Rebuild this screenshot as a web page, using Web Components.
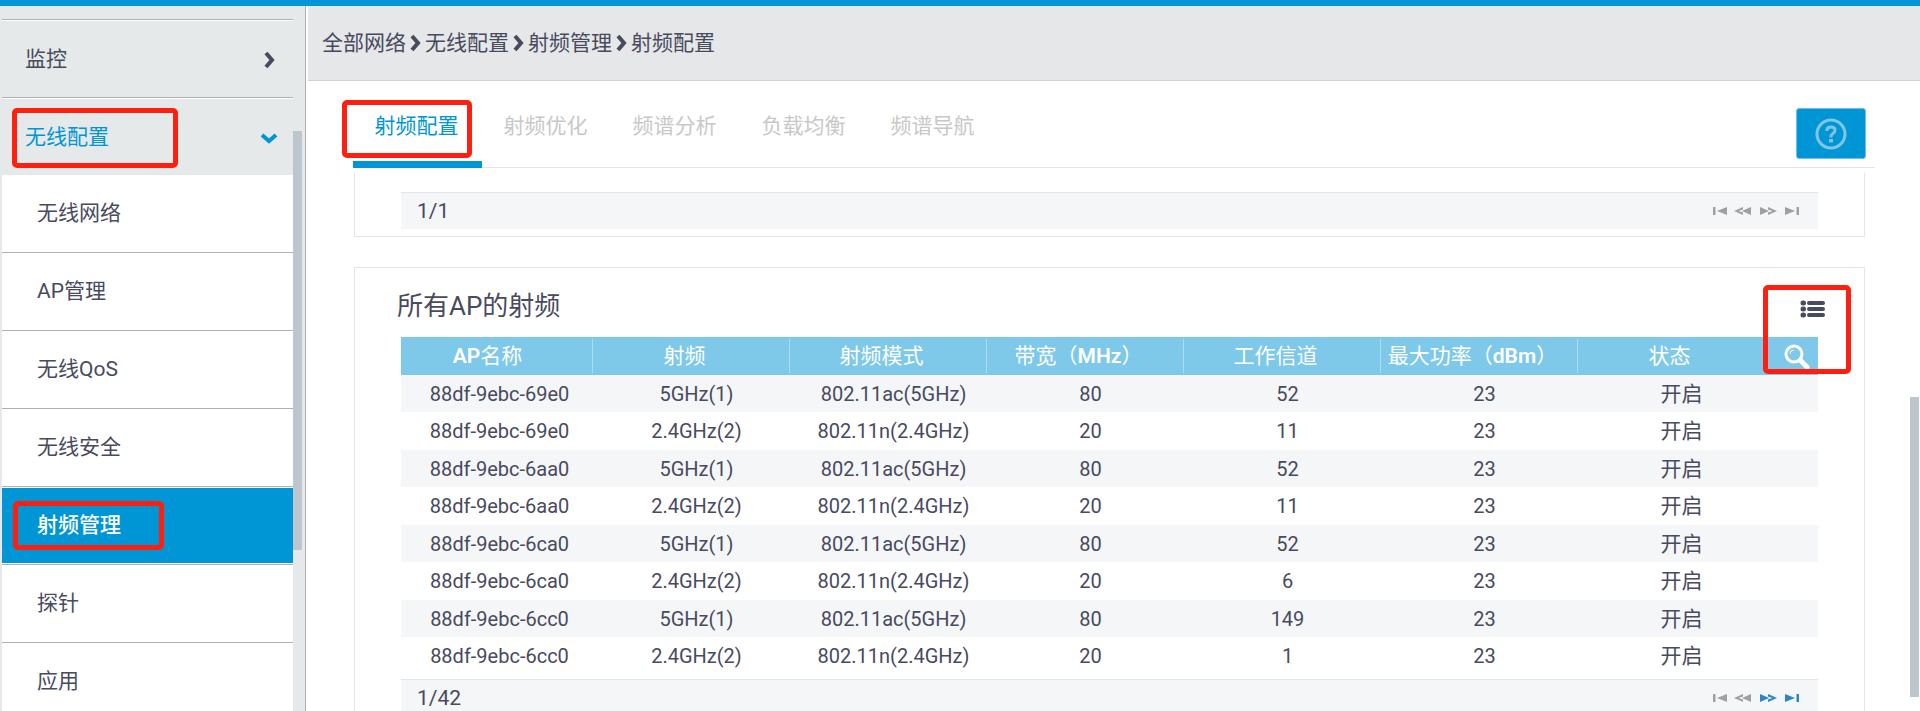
<!DOCTYPE html>
<html lang="zh-CN">
<head>
<meta charset="utf-8">
<meta name="viewport" content="width=device-width, initial-scale=1">
<title>射频配置</title>
<style>
    html, body {
        margin: 0;
        height: 100%;
    }
    body {
        font-family: Roboto, "Noto Sans CJK SC", sans-serif;
        font-size: 21px;
        color: #484a5e;
        background: #fff;
        --blue: #0096d6;
        --line: #e3e6e8;
        --stripe: #f5f6f8;
        --thumb: #bdc5cf;
    }
</style>
</head>
<body>
<wlan-app></wlan-app>
<script>
(function () {
    function define(name, html, setup) {
        const template = document.createElement("template");
        template.innerHTML = html;
        customElements.define(name, class extends HTMLElement {
            constructor() {
                super();
                this.attachShadow({ mode: "open" });
                this.shadowRoot.appendChild(template.content.cloneNode(true));
            }
            connectedCallback() {
                if (setup) {
                    setup(this, this.shadowRoot);
                }
            }
        });
    }

    // red frame drawn over its positioned parent
    define("mark-box", `
    <style>
    :host {
        position: absolute;
        box-sizing: border-box;
        border: 5px solid #ff1f10;
        border-radius: 5px;
        pointer-events: none;
        z-index: 2;
    }
    </style>
    `);

    define("nav-group", `
    <style>
    :host { display: block; }
    button {
        position: relative;
        display: flex;
        align-items: center;
        justify-content: space-between;
        box-sizing: border-box;
        width: 100%;
        height: 78px;
        padding: 0 15px 0 23px;
        border: 0;
        border-top: 1px solid #b0b0b0;
        box-shadow: inset 0 1px #fff;
        background: none;
        color: inherit;
        font: inherit;
        text-align: left;
    }
    span { padding-bottom: 4px; }
    svg {
        width: 18px;
        height: 18px;
        margin-top: 2px;
        fill: none;
        stroke: currentColor;
        stroke-width: 4;
    }
    :host([open]) button { color: var(--blue); }
    :host([open]) svg { transform: rotate(90deg); }
    mark-box { left: 10px; top: 10px; width: 166px; height: 60px; }
    </style>
    <button type="button">
        <span id="label"></span>
        <svg viewBox="0 0 18 18"><path d="M6 2l6 7-6 7"/></svg>
    </button>
    <slot></slot>
    `, function (host, root) {
        root.getElementById("label").textContent = host.getAttribute("label");
        root.querySelector("button").setAttribute("aria-expanded", host.hasAttribute("open"));
        if (host.hasAttribute("marked")) {
            root.querySelector("button").appendChild(document.createElement("mark-box"));
        }
    });

    define("nav-item", `
    <style>
    :host {
        display: block;
        border-top: 1px solid #b0b0b0;
        background: #fff;
    }
    :host(:first-child) { border-top: 0; }
    a {
        position: relative;
        display: flex;
        align-items: center;
        box-sizing: border-box;
        height: 77px;
        border: solid #fff;
        border-width: 1px 0;
        padding: 0 0 6px 35px;
        color: inherit;
        text-decoration: none;
    }
    :host([current]) a {
        background: var(--blue);
        color: #fff;
        font-weight: 500;
    }
    mark-box { left: 11px; top: 13px; width: 151px; height: 49px; }
    </style>
    <a href="#"><slot></slot></a>
    `, function (host, root) {
        if (host.hasAttribute("current")) {
            root.querySelector("a").setAttribute("aria-current", "page");
            root.querySelector("a").appendChild(document.createElement("mark-box"));
        }
    });

    define("side-nav", `
    <style>
    :host {
        display: block;
        position: relative;
        overflow: hidden;
        box-sizing: border-box;
        border-right: 1px solid #b0b0b0;
        background: #e5e9e9;
    }
    nav { padding: 13px 12px 0 2px; }
    .thumb {
        position: absolute;
        top: 125px;
        right: 3px;
        width: 9px;
        height: 419px;
        background: var(--thumb);
    }
    </style>
    <nav><slot></slot></nav>
    <div class="thumb"></div>
    `);

    define("crumb-trail", `
    <style>
    :host {
        display: block;
        padding: 21px 14px;
        border-bottom: 1px solid #d2d2d2;
        background: #e5e7e8;
    }
    ol {
        display: flex;
        align-items: center;
        margin: 0;
        padding: 0;
        list-style: none;
        line-height: 32px;
    }
    li { display: flex; align-items: center; }
    a { color: inherit; text-decoration: none; }
    svg {
        width: 19px;
        height: 18px;
        fill: none;
        stroke: currentColor;
        stroke-width: 4;
    }
    li:last-child svg { display: none; }
    </style>
    <ol></ol>
    `, function (host, root) {
        root.querySelector("ol").innerHTML = host.getAttribute("path").split("/").map(function (name) {
            return `<li><a href="#">${name}</a><svg viewBox="0 0 19 18"><path d="M6 2l6 7-6 7"/></svg></li>`;
        }).join("");
    });

    define("tab-bar", `
    <style>
    :host {
        display: flex;
        justify-content: space-between;
        align-items: flex-start;
        position: relative;
        height: 86px;
        margin: 0 45px;
        padding-right: 9px;
        border-bottom: 1px solid var(--line);
    }
    div { display: flex; }
    button {
        font: inherit;
        border: 0;
        padding: 0;
        background: none;
    }
    .tab {
        width: 129px;
        height: 87px;
        border-bottom: 7px solid transparent;
        padding-right: 2px;
        color: #c8c8c8;
    }
    .tab[aria-selected=true] {
        color: var(--blue);
        border-bottom-color: var(--blue);
    }
    .tab span { display: block; height: 72px; line-height: 60px; padding-top: 11px; box-sizing: border-box; }
    .help {
        display: flex;
        align-items: center;
        justify-content: center;
        width: 70px;
        height: 51px;
        margin-top: 27px;
        border: 1px solid #6fc0e4;
        border-radius: 3px;
        background: var(--blue);
    }
    svg { width: 32px; height: 32px; fill: none; stroke: #80c5e2; }
    mark-box { left: -11px; top: 19px; width: 130px; height: 58px; }
    </style>
    <div role="tablist"></div>
    <button class="help" type="button" aria-label="帮助">
        <svg viewBox="0 0 32 32">
            <circle cx="16" cy="16" r="14" stroke-width="3"/>
            <path stroke-width="3" d="M12 13v-1q0-3 4-3t4 3q0 2-2 3.500t-2 2.500v1.500"/>
            <path stroke-width="4" d="M16 21v3.500"/>
        </svg>
    </button>
    <mark-box></mark-box>
    `, function (host, root) {
        root.querySelector("div").innerHTML = host.getAttribute("tabs").split(",").map(function (name, i) {
            return `<button class="tab" type="button" role="tab" aria-selected="${i === 0}"><span>${name}</span></button>`;
        }).join("");
    });

    define("page-bar", `
    <style>
    :host {
        display: flex;
        align-items: center;
        justify-content: space-between;
        height: 36px;
        padding: 0 16px;
        border-top: 1px solid var(--line);
        background: var(--stripe);
    }
    div { display: flex; gap: 4px; }
    button {
        display: flex;
        padding: 0;
        border: 0;
        background: none;
        color: #2a86c4;
    }
    button:disabled { color: #a0a0a3; }
    svg { width: 20px; height: 10px; fill: currentColor; }
    </style>
    <span><slot></slot></span>
    <div>
        <button type="button" aria-label="首页" class="back"><svg viewBox="0 0 20 10"><path d="M3 1h2.500v8H3zM17 1v8L7 5z"/></svg></button>
        <button type="button" aria-label="上一页" class="back"><svg viewBox="0 0 20 10"><path d="M17 1v8L8 5zM9 1v2.500L4.500 5 9 6.500v2.500L0 5z"/></svg></button>
        <button type="button" aria-label="下一页" class="next"><svg viewBox="0 0 20 10"><path d="M2 1v8l9-4zM10 1v2.500l4.500 1.500L10 6.500v2.500l9-4z"/></svg></button>
        <button type="button" aria-label="末页" class="next"><svg viewBox="0 0 20 10"><path d="M3 1v8l10-4zM14.500 1h2.500v8h-2.500z"/></svg></button>
    </div>
    `, function (host, root) {
        root.querySelectorAll("button").forEach(function (b) {
            b.disabled = b.className === "back" || !host.hasAttribute("more");
        });
    });

    define("list-panel", `
    <style>
    :host {
        display: block;
        position: relative;
        margin: 0 55px 30px 46px;
        padding: 0 46px 7px;
        border: 1px solid var(--line);
    }
    :host([cut]) { border-top: 0; padding-top: 19px; }
    header {
        display: flex;
        align-items: center;
        justify-content: space-between;
        box-sizing: border-box;
        height: 69px;
        padding-top: 12px;
        margin: 0 -8px 0 -4px;
    }
    :host([cut]) header { display: none; }
    h2 { margin: 0; font-size: 26px; font-weight: 400; line-height: 40px; padding-bottom: 6px; }
    button { display: flex; padding: 0; border: 0; background: none; color: inherit; }
    svg { width: 26px; height: 20px; }
    </style>
    <header>
        <h2></h2>
        <button type="button" aria-label="列设置">
            <svg viewBox="0 0 26 20" fill="none" stroke="currentColor" stroke-width="4" stroke-linecap="round">
                <path d="M3 4h.500M3 10h.500M3 16h.500" stroke-width="5"/>
                <path d="M9 4h14M9 10h14M9 16h14"/>
            </svg>
        </button>
    </header>
    <slot></slot>
    `, function (host, root) {
        root.querySelector("h2").textContent = host.getAttribute("heading");
    });

    define("ap-table", `
    <style>
    :host { display: block; position: relative; padding-bottom: 4px; }
    table {
        width: 100%;
        table-layout: fixed;
        border-collapse: collapse;
        text-align: center;
        font-size: 20px;
    }
    th, td { padding: 0; white-space: nowrap; line-height: 30px; }
    th {
        height: 38px;
        background: #7ec8ea;
        color: #fff;
        font-size: 21px;
        font-weight: 400;
    }
    th b { font-weight: 600; }
    th span {
        display: block;
        margin-right: 5px;
        padding-right: 18px;
        border-right: 1px solid #afdcf1;
        line-height: 34px;
    }
    th:nth-child(7) span { border-right-color: transparent; }
    th:last-child { width: 38px; }
    tbody tr { height: 37px; }
    tbody tr:nth-child(even) { height: 38px; }
    tbody tr:nth-child(odd) { background: var(--stripe); }
    td:nth-child(7) { font-size: 21px; }
    th button { display: flex; padding: 0 0 0 3px; border: 0; background: none; }
    svg { width: 28px; height: 28px; fill: none; stroke: #fff; }
    mark-box { right: -33px; top: -52px; width: 88px; height: 89px; }
    </style>
    <table>
        <thead><tr>
            <th><span><b>AP</b>名称</span></th>
            <th><span>射频</span></th>
            <th><span>射频模式</span></th>
            <th><span>带宽（<b>MHz</b>）</span></th>
            <th><span>工作信道</span></th>
            <th><span>最大功率（<b>dBm</b>）</span></th>
            <th><span>状态</span></th>
            <th><button type="button" aria-label="搜索">
                <svg viewBox="0 0 28 28">
                    <circle cx="11" cy="12" r="8" stroke-width="3"/>
                    <path d="M7 12q0-4 4-4" stroke-width="1"/>
                    <path d="M18 19l6 6" stroke-width="5" stroke-linecap="round"/>
                </svg>
            </button></th>
        </tr></thead>
        <tbody></tbody>
    </table>
    <mark-box></mark-box>
    `, function (host, root) {
        const rows = [
            ["88df-9ebc-69e0", 1, 52],
            ["88df-9ebc-69e0", 2, 11],
            ["88df-9ebc-6aa0", 1, 52],
            ["88df-9ebc-6aa0", 2, 11],
            ["88df-9ebc-6ca0", 1, 52],
            ["88df-9ebc-6ca0", 2, 6],
            ["88df-9ebc-6cc0", 1, 149],
            ["88df-9ebc-6cc0", 2, 1]
        ];
        root.querySelector("tbody").innerHTML = rows.map(function (r) {
            const radio = r[1] === 1
                ? ["5GHz(1)", "802.11ac(5GHz)", 80]
                : ["2.4GHz(2)", "802.11n(2.4GHz)", 20];
            const cells = [r[0]].concat(radio, [r[2], 23, "开启"]);
            return "<tr>" + cells.map(c => `<td>${c}</td>`).join("") + "<td></td></tr>";
        }).join("");
    });

    define("wlan-app", `
    <style>
    :host {
        display: grid;
        grid-template: minmax(0, 1fr) / 306px minmax(0, 1fr);
        column-gap: 2px;
        box-sizing: border-box;
        height: 100vh;
        border-top: 6px solid var(--blue);
        overflow: hidden;
    }
    main { position: relative; overflow: hidden; }
    .content { padding-top: 5px; }
    .thumb {
        position: absolute;
        top: 391px;
        right: 1px;
        width: 9px;
        height: 300px;
        background: var(--thumb);
    }
    </style>
    <side-nav>
        <nav-group label="监控"></nav-group>
        <nav-group label="无线配置" open marked>
            <nav-item>无线网络</nav-item>
            <nav-item>AP管理</nav-item>
            <nav-item>无线QoS</nav-item>
            <nav-item>无线安全</nav-item>
            <nav-item current>射频管理</nav-item>
            <nav-item>探针</nav-item>
            <nav-item>应用</nav-item>
        </nav-group>
    </side-nav>
    <main>
        <crumb-trail path="全部网络/无线配置/射频管理/射频配置"></crumb-trail>
        <tab-bar tabs="射频配置,射频优化,频谱分析,负载均衡,频谱导航"></tab-bar>
        <div class="content">
            <list-panel cut><page-bar>1/1</page-bar></list-panel>
            <list-panel heading="所有AP的射频">
                <ap-table></ap-table>
                <page-bar more>1/42</page-bar>
            </list-panel>
        </div>
        <div class="thumb"></div>
    </main>
    `);
})();
</script>
</body>
</html>
